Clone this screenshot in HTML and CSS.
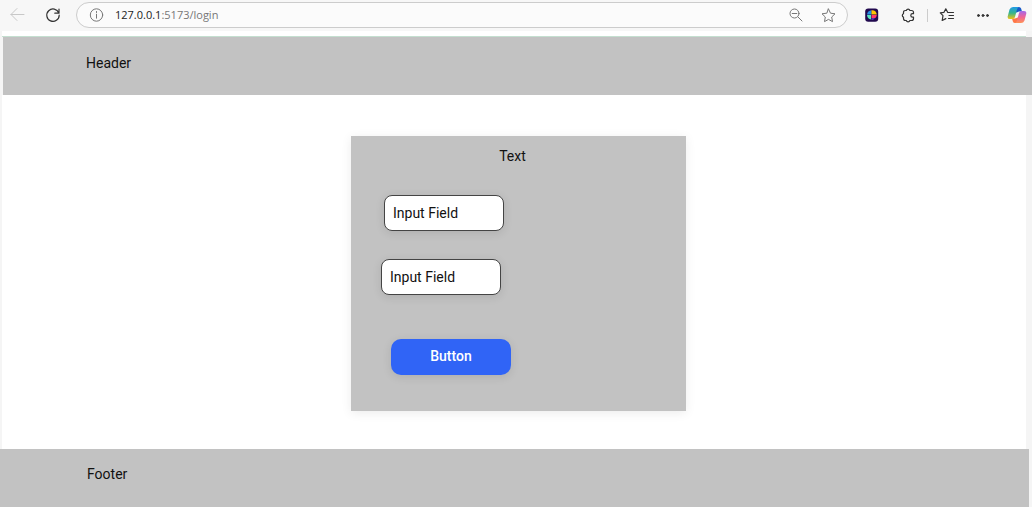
FILE: index.html
```html
<!DOCTYPE html>
<html lang="en">
<head>
<meta charset="utf-8">
<meta name="viewport" content="width=device-width, initial-scale=1">
<title>Login</title>
<link rel="stylesheet" href="styles.css">
</head>
<body>
<nav class="toolbar" aria-label="Browser">
  <button class="tool tool-muted" aria-label="Back"><svg viewBox="0 0 16 16"><path d="M15 7.500H2M8 1.500l-6 6 6 6"/></svg></button>
  <button class="tool" aria-label="Reload"><svg class="bold" viewBox="0 0 16 16"><path d="M13.800 6A6.200 6.200 0 1 0 14.200 8.200M14 2v4.200H9.800"/></svg></button>
  <div class="address">
    <button class="tool tool-grey" aria-label="Site information"><svg viewBox="0 0 16 16"><circle cx="8.500" cy="8" r="6.200"/><path d="M8.500 7.200v4M8.500 4.500v1"/></svg></button>
    <a class="url" href="#"><span class="host">127.0.0.1</span>:5173/login</a>
    <button class="tool tool-grey" aria-label="Zoom"><svg viewBox="0 0 16 16"><circle cx="6.500" cy="6.500" r="4.500"/><path d="M4.200 6.500h4.600M10 10l4 4"/></svg></button>
    <button class="tool tool-grey" aria-label="Add to favorites"><svg viewBox="0 0 16 16"><path d="M8.500 2l2 4.200 4.500.6-3.300 3.200.8 4.600-4-2.200-4 2.200.8-4.600L2 6.800l4.500-.6z"/></svg></button>
  </div>
  <button class="tool" aria-label="Extension"><svg viewBox="0 0 16 16">
    <rect class="logo-bg" x="1.200" y="1.500" width="13" height="13.300" rx="3"/>
    <path class="logo-blue" d="M7.500 3.200v4.300H3A5 5 0 0 1 7.500 3.200z"/><path class="logo-yellow" d="M7.500 3.200a5 5 0 0 1 5.300 4.300H7.500z"/>
    <path class="logo-mint" d="M3 8h4v4.500A5 5 0 0 1 3 8z"/><path class="logo-pink" d="M7.500 8h5.300a5 5 0 0 1-1.500 3H7.500z"/><path class="logo-violet" d="M7.500 11.300H11A5 5 0 0 1 7.500 13z"/>
  </svg></button>
  <div class="tool-group">
    <button class="tool" aria-label="Extensions"><svg class="bold" viewBox="0 0 16 16"><path d="M3.500 5.500q0-2 2-2h.8a1.900 1.900 0 0 1 3.600 0h1.600q2 0 2 2v1.200h-1a1.700 1.700 0 0 0 0 3.400h1v1.400q0 2-2 2H9.900a1.900 1.900 0 0 1-3.600 0h-.8q-2 0-2-2v-1.400a1.800 1.800 0 0 1 0-3.400z"/></svg></button>
    <span class="divider"></span>
    <button class="tool" aria-label="Favorites"><svg class="bold" viewBox="0 0 16 16"><path d="M9.500 5.500L8.600 5.300 6.800 1.800 5 5.300l-3.700.6L4 8.600l-.8 4.900 3.600-1.900M9 5.500h5.500M10 8.500h4.500M9.500 11.500h5"/></svg></button>
  </div>
  <button class="tool" aria-label="Settings and more"><svg class="dots" viewBox="0 0 16 16"><circle cx="3.500" cy="8.500" r="1"/><circle cx="8" cy="8.500" r="1"/><circle cx="12.500" cy="8.500" r="1"/></svg></button>
  <button class="tool tool-wide" aria-label="Copilot"><svg viewBox="0 0 20 20">
    <defs>
      <linearGradient id="cool" x1="0" y1="0" x2="0" y2="1"><stop offset="0" stop-color="#209be8"/><stop offset=".5" stop-color="#35b58d"/><stop offset="1" stop-color="#f2c313"/></linearGradient>
      <linearGradient id="warm" x1="0" y1="0" x2="0" y2="1"><stop offset="0" stop-color="#a268ed"/><stop offset=".5" stop-color="#f06495"/><stop offset="1" stop-color="#ff9355"/></linearGradient>
    </defs>
    <path fill="#1759c9" d="M7 2h5q1.600 0 2.100 1.500L15 6.500h-3L8 8z"/>
    <path fill="#ff7747" d="M13 18H8q-1.600 0-2.100-1.500L5 13.500h3l4-1.500z"/>
    <path fill="url(#cool)" d="M6 2H12Q10.500 2.500 9.800 5L8 12q-.5 2-2.500 2H3Q0 14 .8 11l1.700-6.500Q3.500 2 6 2z"/>
    <path fill="url(#warm)" d="M14 18H8q1.500-.5 2.200-3l1.800-7q.5-2 2.500-2H17q3 0 2.200 3l-1.700 6.500q-1 2.500-3.500 2.500z"/>
  </svg></button>
</nav>
<div class="viewport">
  <div class="header-edge"></div>
  <header class="band header">Header</header>
  <main class="content">
    <form class="card">
      <h1 class="title">Text</h1>
      <input class="control field" type="text" aria-label="First input" value="Input Field">
      <input class="control field field-second" type="text" aria-label="Second input" value="Input Field">
      <button class="control submit" type="button">Button</button>
    </form>
  </main>
</div>
<footer class="band footer">Footer</footer>
</body>
</html>
```
FILE: styles.css
```css
* { box-sizing: border-box; }
body {
  display: flex;
  flex-direction: column;
  min-height: 100vh;
  margin: 0;
  background: #f5f5f5;
  color: #111;
  font: 14px/20px Roboto, sans-serif;
}
button { padding: 0; border: 0; background: none; font: inherit; }

.toolbar {
  display: flex;
  align-items: center;
  gap: 20px;
  height: 31px;
  padding: 0 5px 1px 9px;
  background: #f7f7f7;
}
.tool { flex: none; width: 16px; height: 16px; color: #333; }
.tool-muted { color: #c8c8c8; }
.tool-grey { color: #777; }
.tool-wide { width: 20px; height: 20px; margin-left: -4px; }
.tool svg { display: block; width: 100%; height: 100%; fill: none; }
.tool path, .tool circle { stroke-linecap: round; stroke-linejoin: round; }
.tool:not(.tool-wide) svg { stroke: currentColor; }
.tool .bold { stroke-width: 1.2; }
.tool .dots { fill: currentColor; stroke: none; }
.tool [class^="logo"] { stroke: none; }
.logo-bg { fill: #21094e; }
.logo-blue { fill: #238ee5; }
.logo-yellow { fill: #ffc400; }
.logo-mint { fill: #58e6bd; }
.logo-pink { fill: #ff3868; }
.logo-violet { fill: #6842d4; }
.address {
  display: flex;
  flex: 1;
  align-items: center;
  gap: 16px;
  height: 26px;
  margin: 0 -4px 0 -5px;
  padding: 0 11px;
  border: 1px solid #ccc;
  border-radius: 13px;
  background: #fbfbfb;
}
.url {
  flex: 1;
  margin-left: -5px;
  color: #777;
  font: 11px/16px "Open Sans", "Noto Sans", sans-serif;
  text-decoration: none;
}
.host { color: #222; }
.tool-group { display: flex; align-items: center; gap: 11px; }
.divider { width: 1px; height: 13px; background: #ccc; }

.viewport { display: flex; flex: 1; flex-direction: column; }
.header-edge {
  height: 6px;
  margin: 0 6px 0 2px;
  border-bottom: 1px solid #c4dfd0;
  background: #fff;
}
.band { height: 58px; background: #c2c2c2; }
.header { margin-left: 3px; padding: 16px 83px; }
.footer { margin-right: 3px; padding: 15px 87px; }
.content {
  display: flex;
  flex: 1;
  align-items: center;
  justify-content: center;
  margin: 0 6px 0 2px;
  padding: 41px 0 38px 9px;
  background: #fff;
}
.card {
  display: flex;
  flex-direction: column;
  align-items: flex-start;
  width: 335px;
  padding: 10px 12px 36px 30px;
  background: #c2c2c2;
  box-shadow: 0 2px 10px rgb(0 0 0 / 8%);
}
.title { align-self: center; margin: 0 30px 29px 0; font: inherit; }
.control {
  width: 120px;
  height: 36px;
  border-radius: 8px;
  box-shadow: 0 2px 10px rgb(0 0 0 / 10%);
}
.field {
  margin-left: 3px;
  padding: 0 8px;
  border: 1px solid #444;
  background: #fff;
  color: #111;
  font: inherit;
}
.field-second { margin: 28px 0 44px; }
.submit {
  margin-left: 10px;
  padding-bottom: 2px;
  border-radius: 10px;
  background: #3064f6;
  color: #fff;
  font-weight: 500;
}
```
